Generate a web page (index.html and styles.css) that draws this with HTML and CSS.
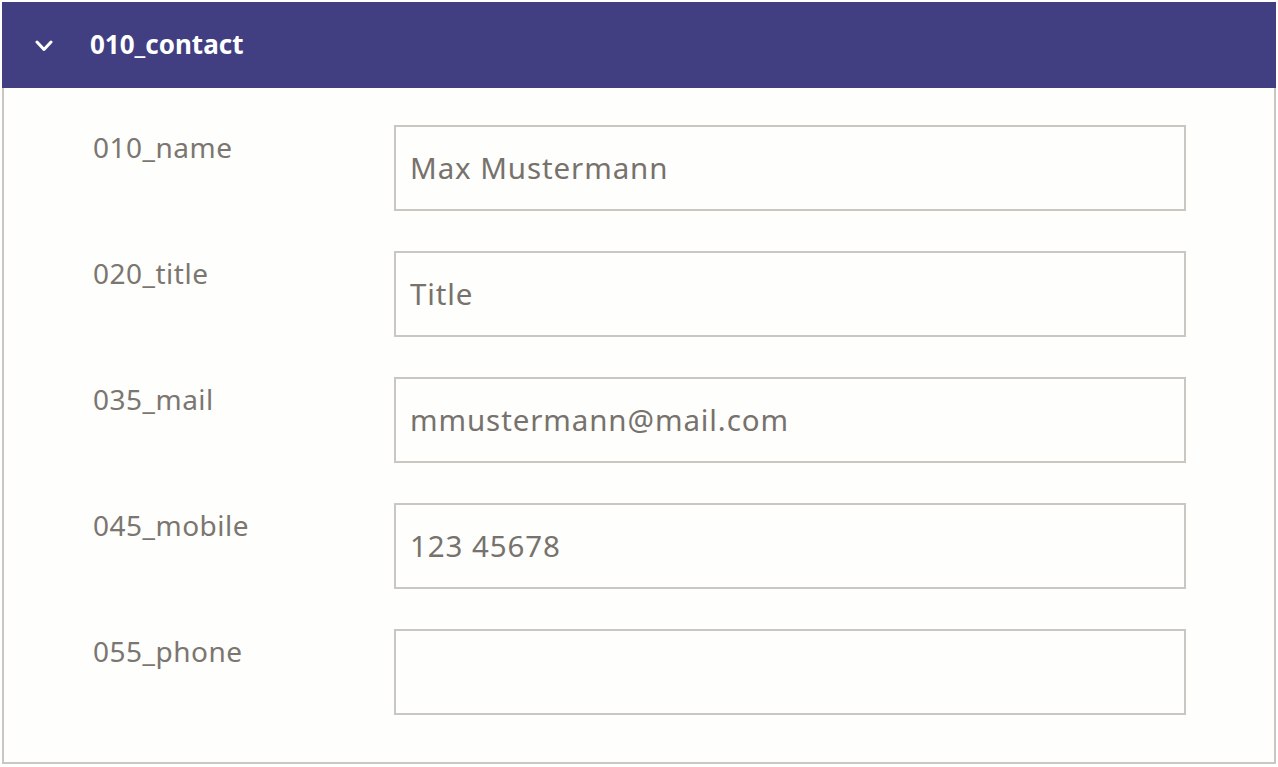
FILE: index.html
```html
<!DOCTYPE html>
<html>
<head>
<meta charset="utf-8">
<link rel="stylesheet" href="styles.css">
</head>
<body>
<div class="panel">
  <div class="panel-header">
    <svg class="chev" width="18" height="12" viewBox="0 0 18 12"><polyline points="2,2 9,9.5 16,2" fill="none" stroke="#fff" stroke-width="3" stroke-linecap="round" stroke-linejoin="round"/></svg>
    <span class="panel-title">010_contact</span>
  </div>
  <div class="panel-body">
    <div class="row"><div class="label">010_name</div><div class="field">Max Mustermann</div></div>
    <div class="row"><div class="label">020_title</div><div class="field">Title</div></div>
    <div class="row"><div class="label">035_mail</div><div class="field">mmustermann@mail.com</div></div>
    <div class="row"><div class="label">045_mobile</div><div class="field">123 45678</div></div>
    <div class="row"><div class="label">055_phone</div><div class="field"></div></div>
  </div>
</div>
</body>
</html>
```

FILE: styles.css
```css
html, body {
  margin: 0;
  padding: 0;
  background: #ffffff;
}
body {
  padding: 2px;
  font-family: "Noto Sans", "Open Sans", sans-serif;
}
.panel {
  width: 1274px;
}
.panel-header {
  height: 86px;
  background: #413f82;
  display: flex;
  align-items: center;
  padding-left: 33px;
  box-sizing: border-box;
}
.chev {
  display: block;
  margin-top: 1px;
}
.panel-title {
  color: #ffffff;
  font-weight: 700;
  font-size: 26px;
  margin-left: 37px;
  margin-top: -2px;
}
.panel-body {
  background: #fefefd;
  border: 2px solid #cac6c1;
  border-top: none;
  height: 676px;
  box-sizing: border-box;
  padding: 37px 0 0 89px;
  display: flex;
  flex-direction: column;
  gap: 40px;
}
.row {
  display: flex;
  align-items: flex-start;
}
.label {
  width: 303px;
  margin-left: -2px;
  padding-left: 2px;
  padding-top: 4px;
  box-sizing: border-box;
  color: #7b7670;
  font-size: 28px;
  letter-spacing: 0.5px;
  line-height: 36px;
}
.field {
  width: 792px;
  height: 86px;
  box-sizing: border-box;
  border: 2px solid #cac6c1;
  background: #fefefd;
  color: #77726c;
  font-size: 29.5px;
  letter-spacing: 0.9px;
  display: flex;
  align-items: center;
  padding-left: 14px;
  padding-bottom: 2px;
}
```
